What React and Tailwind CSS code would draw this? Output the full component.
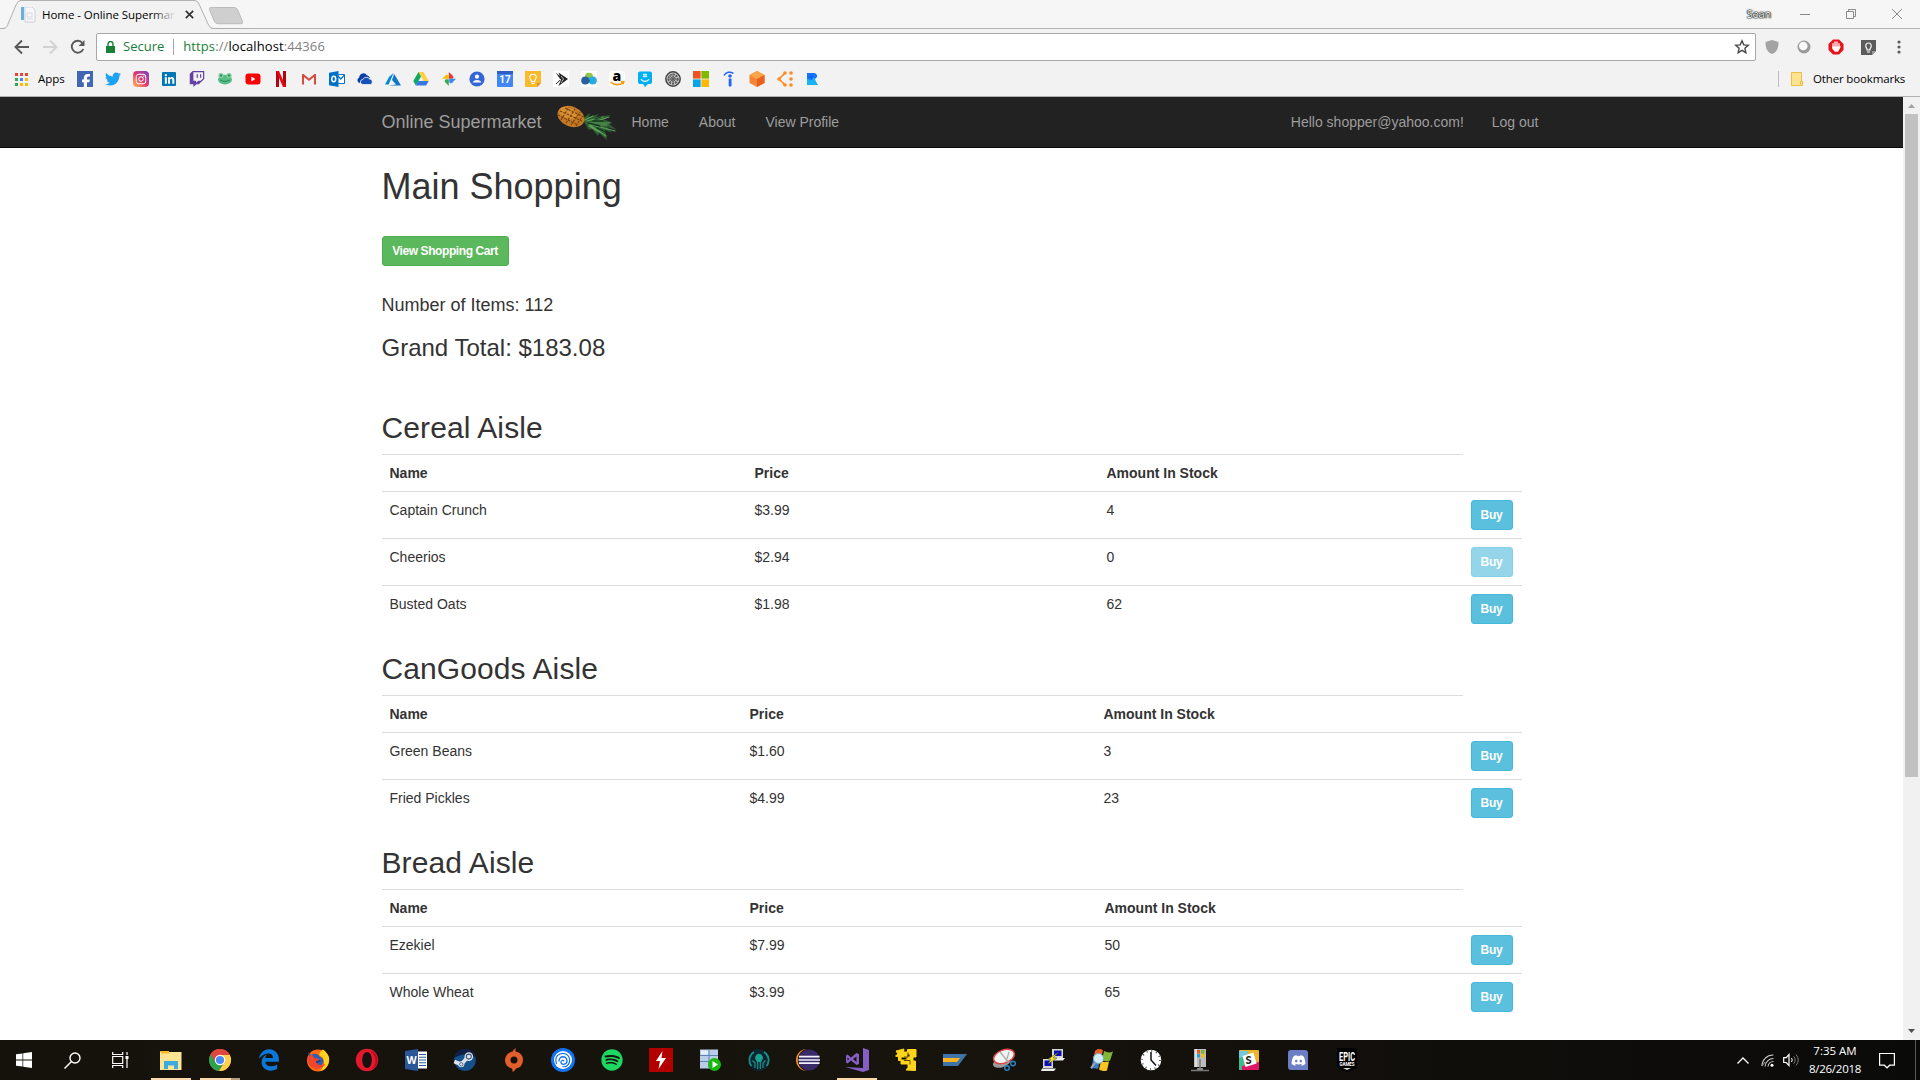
import React from "react";
import {
  FaFacebookF, FaTwitter, FaInstagram, FaLinkedinIn, FaTwitch,
  FaSpotify, FaDiscord, FaEdgeLegacy,
} from "react-icons/fa6";

const S = ({ s = 16, vb = "0 0 16 16", children }) => (
  <svg width={s} height={s} viewBox={vb} fill="none" className="block shrink-0 overflow-visible">{children}</svg>
);

/* ---------- bookmark icons ---------- */
const bookmarks = [
  <div className="flex h-4 w-4 items-end justify-end overflow-hidden bg-[#4267b2] text-white"><FaFacebookF size={14} className="-mb-px" /></div>,
  <FaTwitter size={16} color="#1da1f2" />,
  <div className="flex h-4 w-4 items-center justify-center rounded bg-linear-to-tr from-[#fdb844] via-[#e1306c] to-[#6a35c9] text-white"><FaInstagram size={12} /></div>,
  <div className="flex h-[14px] w-[14px] items-center justify-center rounded-[1px] bg-[#0077b5] text-white"><FaLinkedinIn size={11} /></div>,
  <FaTwitch size={16} color="#6441a5" />,
  <S>
    <ellipse cx="8" cy="8.6" rx="7" ry="4.9" fill="#57bd84" />
    <circle cx="4" cy="4.6" r="2.6" fill="#7ccf9f" /><circle cx="12" cy="4.6" r="2.6" fill="#7ccf9f" />
    <circle cx="4" cy="4.5" r="1.1" fill="#2f7d55" /><circle cx="12" cy="4.5" r="1.1" fill="#2f7d55" />
    <path d="M3 9c3 1.8 7 1.8 10 0" stroke="#2f8a5b" />
  </S>,
  <S><rect x=".5" y="2.5" width="15" height="11" rx="3" fill="#f00" /><path d="M6.4 5.6v4.8L10.4 8z" fill="#fff" /></S>,
  <S><path d="M3 0h3v16H3zM10 0h3v16h-3z" fill="#b1060f" /><path d="M3 0h3l7 16h-3z" fill="#e50914" /></S>,
  <S><path d="M1 3h14v10.500H1z" fill="#f2f2f2" /><path d="M1 3v10.500h2V6l5 4 5-4v7.500h2V3h-1.500L8 7.500 2.500 3z" fill="#d54b3d" /></S>,
  <S>
    <path d="M8 3.500h7.500v9H8z" fill="#fff" stroke="#0072c6" /><path d="M8 4l3.800 4 3.700-4" stroke="#0072c6" strokeWidth="1.200" />
    <path d="M0 1.800L9.500 0v16L0 14.200z" fill="#0072c6" /><ellipse cx="4.700" cy="8" rx="2" ry="2.700" stroke="#fff" strokeWidth="1.500" />
  </S>,
  <S><path d="M2.500 12a3 3 0 01-.3-5.600A4.300 4.300 0 0110 4.200 5 5 0 0113 7L7 9z" fill="#0a3fa8" /><path d="M6 13.500a2.500 2.500 0 01-.2-5A3.800 3.800 0 0112.500 8a2.800 2.800 0 01.8 5.500z" fill="#1450b8" stroke="#f2f2f2" strokeWidth=".8" /></S>,
  <S><path d="M8.600 2L4.200 5.800 0 13.400h3.600z" fill="#0089d6" /><path d="M9.200 3L7 9l4 4.500-7.500 1H16z" fill="#1277c4" /></S>,
  <S><path d="M5.500 1h5l5.200 9h-5z" fill="#ffcf44" /><path d="M5.500 1L.3 10l2.500 4.500L8 5.500z" fill="#11a861" /><path d="M5.200 10h10.500l-2.600 4.500H2.700z" fill="#3777e3" /></S>,
  <S>
    <path d="M7.800 7.800V1l4.200 4c.7 1 .3 2.800-1 2.800z" fill="#e53935" /><path d="M8.200 7.800H15l-4 4.200c-1.200.8-2.800 0-2.800-1.500z" fill="#4285f4" />
    <path d="M7.800 8.200V15L4 11c-.8-1.200 0-2.800 1.500-2.800z" fill="#34a853" /><path d="M7.800 7.800H1l4-3.700c1.300-.8 2.800 0 2.800 1.400z" fill="#fbbc05" />
  </S>,
  <S><circle cx="8" cy="8" r="7.600" fill="#3367d6" /><circle cx="8" cy="5.700" r="2.100" fill="#fff" /><path d="M3.800 11.600c0-3.500 8.400-3.500 8.400 0z" fill="#fff" /></S>,
  <div className="flex h-4 w-4 flex-col items-center rounded-[1px] bg-[#4285f4]"><div className="h-[3px] w-full bg-[#2f5fc4]" /><div className="font-[Roboto] text-[10px] leading-[12px] font-bold text-white">17</div></div>,
  <S><path d="M0 0h16v12l-4 4H0z" fill="#f9bb2d" /><path d="M12 16l4-4h-4z" fill="#d9931c" /><path d="M6.300 10.800V9.500C3.200 6.500 5 3.200 8 3.200s4.800 3.300 1.700 6.300v1.300zM6.500 12.500h3" stroke="#fff" strokeWidth="1.100" /></S>,
  <S><path d="M0 0h16v16H0z" fill="#fff" /><path d="M2.500 1.500L8 6l-.5 2.500zM5.500 1.500L15 8l-9.500 7L8 8.500z" fill="#222" /><path d="M3 13l4-3.800" stroke="#222" /><path d="M8 5l2.500 3-2.500 4" stroke="#fff" strokeWidth=".7" /></S>,
  <S><path d="M0 0h16v16H0z" fill="#fff" /><circle cx="8" cy="5.800" r="4" fill="#8cc63f" /><circle cx="4.300" cy="9.500" r="4.100" fill="#2b5f9e" /><circle cx="11.700" cy="9.500" r="4.100" fill="#29abe2" /><path d="M8 7.500a4 4 0 010 4 4 4 0 010-4z" fill="#145b80" /></S>,
  <div className="flex h-4 w-4 items-center justify-center rounded-sm bg-white"><svg width="16" height="16" viewBox="0 0 16 16" className="overflow-visible"><text x="3.600" y="10" fontFamily="Open Sans" fontWeight="800" fontSize="14" fill="#000">a</text><path d="M1.500 11c3.500 3.400 9 3.500 12.500.6M12 10.800l2.800-.2-.8 2.600" fill="none" stroke="#f90" strokeWidth="1.600" /></svg></div>,
  <S><path d="M3 .5h10q2 0 2 2V11q0 2-2 2h-2l-3 3-2-3H3q-2 0-2-2V2.500q0-2 2-2z" fill="#00aff0" /><path d="M4 8.300c1.500 2.700 6.500 2.700 8 0" stroke="#fff" strokeWidth="1.200" /><path d="M7 2.500v4M9 2.500v4M5.800 3.600h4.400M5.800 5.400h4.400" stroke="#fff" strokeWidth=".8" /></S>,
  <S><circle cx="8" cy="8" r="7.200" stroke="#444" strokeWidth="1.500" fill="#ccc" /><circle cx="8" cy="8" r="4.600" stroke="#555" strokeWidth="1.700" strokeDasharray="2 1" /><circle cx="8" cy="8" r="2.200" stroke="#444" /><path d="M8 2v12M2 8h12M4 4l8 8M12 4l-8 8" stroke="#555" strokeWidth=".7" /></S>,
  <S><path d="M0 0h7.600v7.600H0z" fill="#f25022" /><path d="M8.400 0H16v7.600H8.400z" fill="#7fba00" /><path d="M0 8.400h7.600V16H0z" fill="#00a4ef" /><path d="M8.400 8.400H16V16H8.400z" fill="#ffb900" /></S>,
  <S><path d="M3 4.500C5 .8 9 .3 12.500 2.300" stroke="#2164f3" strokeWidth="1.500" /><circle cx="9" cy="5" r="1.800" fill="#2164f3" /><path d="M7.700 7.500h2.800V15q-1.400 1-2.800 0z" fill="#2164f3" /></S>,
  <S><path d="M8 0l7.500 4v8L8 16 .5 12V4z" fill="#f58536" /><path d="M8 0l7.500 4L8 8 .5 4z" fill="#faa54a" /><path d="M8 8l7.500-4v8L8 16z" fill="#e8601c" /></S>,
  <S><path d="M8 2L2 8l6 6" stroke="#ff8a1f" strokeWidth="1.700" /><g fill="#ff8a1f"><circle cx="8" cy="2" r="1.800" /><circle cx="8" cy="14" r="1.800" /><circle cx="14" cy="2" r="1.800" /><circle cx="14" cy="8" r="1.800" /><circle cx="14" cy="14" r="1.800" /><circle cx="2" cy="8" r="1.800" /></g></S>,
  <S><path d="M2 2h7q3.500.5 3 4l-3 3 4 5H2z" fill="#1473ff" /><path d="M2 8l5 1 2-3 3.500 8H2z" fill="#17b3f5" /><path d="M4.500 6h3" stroke="#0c4fc0" /></S>,
];

/* ---------- taskbar icons ---------- */
const T = ({ children }) => <S s={24} vb="0 0 24 24">{children}</S>;
const apps = [
  [<T><path d="M1 4q0-1 1-1h7l1 1h12.500v18H1z" fill="#ffe493" /><path d="M2 3h8v2.500H2z" fill="#f6b921" /><path d="M5 13h14v8H5z" fill="#3da9dc" /><path d="M9 17.500h6V21H9z" fill="#ffe493" /></T>, "on"],
  [<T>
    <circle cx="12" cy="12" r="11" fill="#e0473c" /><path d="M12 12L2.500 6.500A11 11 0 0011 23l5-9z" fill="#2ba24c" /><path d="M12 6.800h9.700A11 11 0 0111 23l5.500-9z" fill="#fdd14b" />
    <path d="M2.500 6.500A11 11 0 0121.800 7H12l-4.500 7.500z" fill="#e0473c" /><circle cx="12" cy="12" r="5.200" fill="#fff" /><circle cx="12" cy="12" r="4.100" fill="#4a8af4" />
  </T>, "multi"],
  [<FaEdgeLegacy size={22} color="#0b78d7" />],
  [<T>
    <circle cx="12" cy="12.500" r="11" fill="#ff6a13" /><path d="M17 1.500c5.500 4 8 9 5 15a11 11 0 01-8 6.500c7-7 4-14-1-16 1-3 2-4 4-5.500z" fill="#ffd21f" />
    <path d="M2 4l3 3c4-3 8 0 9 2 3 1 4 4 3 6-4 7-12 3-12-2z" fill="#2b5fb8" /><path d="M1.500 10c0 12 13 14 18 6-6 2-8 1-9-2l3-3-5-1-3-4z" fill="#f2452d" /><path d="M10 13l5-1c-1 2-3 3-5 3z" fill="#184487" />
  </T>],
  [<T><ellipse cx="12" cy="12" rx="11.200" ry="11.200" fill="#e3182d" /><ellipse cx="12" cy="12" rx="4.800" ry="8" fill="#15110d" /><path d="M15 3c8 1 11 13 2 18 6-6 4-15-2-18z" fill="#a90e20" /></T>],
  [<T><path d="M13 3.500h10v17H13z" fill="#fff" /><path d="M15 6.500h7M15 9.200h7M15 12h7M15 14.800h7M15 17.500h7" stroke="#2b579a" strokeWidth="1.100" /><path d="M1 3l13-2v22L1 21z" fill="#2b579a" /><text x="2.500" y="16" fontFamily="Open Sans" fontSize="10.500" fontWeight="700" fill="#fff">W</text></T>],
  [<T>
    <circle cx="12" cy="12" r="10.800" fill="#14508c" /><path d="M1.300 10A10.800 10.800 0 0122.700 10C15 5 8 6 1.300 10z" fill="#101d45" />
    <path d="M1.300 13.500l7 3 6-7" stroke="#dde3e8" strokeWidth="3.600" /><circle cx="8.300" cy="16.300" r="3" fill="#dde3e8" /><circle cx="15.800" cy="8.600" r="4.300" fill="#dde3e8" /><circle cx="15.800" cy="8.600" r="2.500" stroke="#39587c" strokeWidth="1.100" /><circle cx="8.300" cy="16.300" r="1.700" stroke="#39587c" strokeWidth=".8" />
  </T>],
  [<T><path d="M14 0c-2 1.500-3 2-3.300 3.500A9 9 0 003 12c0 4 2.500 7.500 7 8.500.5 1.500.7 2.500.5 3.500 2-1 3-2.200 3.500-3.500A9 9 0 0021 12c0-4.500-3-7.800-7.500-8.500-.2-1.500 0-2.500.5-3.500z" fill="#e25f2c" /><circle cx="12" cy="12" r="3.500" fill="#15110d" /></T>],
  [<T><circle cx="12" cy="12" r="12" fill="#1173f0" /><circle cx="12" cy="12" r="9" fill="#fff" /><path d="M5.500 16C3 8.500 8 5 12.500 5.300 17 5.500 19.500 10 18.500 14c-1 3.500-4 5.500-7 4.500" stroke="#1173f0" strokeWidth="1.200" /><path d="M8 13.500c-.3-6.500 8-6 8-.5 0 3.500-5 4.500-6 1.800-.5-2.300 2.300-3.300 3-1.500" stroke="#1173f0" strokeWidth="1.300" /></T>],
  [<FaSpotify size={22} color="#1ed760" />],
  [<T><path d="M0 0h24v24H0z" fill="#b20000" /><path d="M13.500 3L7 13h4l-1.500 8L17 10h-4.500z" fill="#fff" /></T>],
  [<T><path d="M2 1.500h18v19H2z" fill="#b9cce8" /><path d="M2 7.500h18M2 13.500h18M11 1.500v19" stroke="#5f84b8" /><path d="M3 2.500h7v4H3z" fill="#e7effa" /><circle cx="16.500" cy="16.500" r="6.500" fill="#17b90c" /><path d="M14.500 13v7l5.500-3.500z" fill="#fff" /></T>],
  [<T><circle cx="12" cy="12" r="11" fill="#102331" /><path d="M7 4a9.500 9.500 0 00-2.500 14M17 4a9.500 9.500 0 012.500 14" stroke="#168f85" strokeWidth="1.700" /><path d="M8 20v-5l-2.500-2.500M16 20v-5l2.500-2.500M10.700 21v-8M13.300 21v-8" stroke="#168f85" strokeWidth="1.300" /><path d="M8 10.500c0-6.500 8-6.500 8 0l-2 3.500h-4z" fill="#1aa091" /></T>],
  [<T><circle cx="11" cy="12" r="11" fill="#f29022" /><circle cx="13" cy="12" r="11.200" fill="#15110d" /><circle cx="13.200" cy="12" r="10.600" fill="#382b6c" /><path d="M3 8.700h20.500M2.500 12h21.500M3 15.200h20.500" stroke="#f1f1fa" strokeWidth="1.700" /></T>],
  [<T><path d="M18 0l6 2v20l-6 2-18-5 18 1z" fill="#865fc5" /><path d="M1 7.500l1.500-1L6 9.500 11.500 5 14 6v10l-2.500 1L6 12.500 2.500 15.500 1 14.500zm1.500 2v3l1.700-1.500zm5.500 1.500l3.500 3V8.500z" fill="#865fc5" fillRule="evenodd" /></T>, "on"],
  [<T>
    <path d="M2 3l8-2-.5 3H13v5H7v3h6V9h3V6h-2.500V1.500H22V9h-3v4h2.500v9.500L12 22l2-2.500V16H7v-3.500H4.500V9L1.500 8 4 6z" fill="#ffd51b" stroke="#ffd51b" />
    <path d="M14 4.500V9h-4M10 12.500h6v4" stroke="#5d4c04" />
  </T>],
  [<T><path d="M0 6h24L15 18H0z" fill="#3e74a8" /><path d="M0 10h17l-3 4H0z" fill="#ffb31c" /></T>],
  [<T>
    <ellipse cx="10" cy="14" rx="9.500" ry="5" transform="rotate(-22 10 14)" fill="#9c9c9c" /><ellipse cx="12" cy="8.500" rx="10.800" ry="6.500" transform="rotate(-20 12 8.500)" fill="#f4f4f4" stroke="#d44" strokeWidth="1.500" />
    <path d="M8 4l9 11M17 4l-3 10" stroke="#aaa" strokeWidth="1.200" /><circle cx="15" cy="20" r="2.300" stroke="#2a80c4" strokeWidth="1.500" /><circle cx="21" cy="15.500" r="2.300" stroke="#2a80c4" strokeWidth="1.500" />
  </T>],
  [<T>
    <path d="M11 1h11v9H11z" fill="#d8d8d8" /><path d="M13 2.500h7.500v5.500H13z" fill="#0a10b4" /><path d="M9 10h15l-2 2.500H10z" fill="#eee" />
    <path d="M2 11h10v9H2z" fill="#d8d8d8" /><path d="M3.500 12.500h7V18h-7z" fill="#0a10b4" /><path d="M1 20.500h14L13 23H0z" fill="#eee" /><path d="M18 4l-6 6h4l-9 6 3-5H7z" fill="#fff21a" stroke="#333" strokeWidth=".5" />
  </T>],
  [<T>
    <path d="M5 3c3-3 5-2 8-1l-2 9c-3-1.500-5-1.500-8 0z" fill="#e8622a" /><path d="M14 3c3 1.500 6 2 9 .5l-3 9c-3 1.500-5 1-8-.5z" fill="#83b737" />
    <path d="M3 12c3-1.500 5-1 7 0l-2 9c-3-1-5-1-7 0z" fill="#3c7dc8" /><path d="M11 13c3 1 5 1.500 8 .5l-2 9c-3 1-5 .5-8-1z" fill="#f9c41f" /><circle cx="8.500" cy="10.500" r="5" fill="#d3edfc" stroke="#7aa8cc" /><path d="M5 15l-4 5" stroke="#aaa" strokeWidth="2" />
  </T>],
  [<T><circle cx="12" cy="12" r="10.300" fill="#fff" /><circle cx="12" cy="12" r="9" stroke="#333" strokeWidth="1.500" strokeDasharray="1 3.710" /><path d="M12 4v8l5 5.500" stroke="#111" strokeWidth="1.500" /></T>],
  [<T><path d="M6 1h12v18H6z" fill="#bcbcbc" /><path d="M7 1h2v18H7z" fill="#dedede" /><path d="M9 2h3v3.500H9z" fill="#f05423" /><path d="M13 2h3.500v3.500H13z" fill="#79b929" /><path d="M9 6h3v3.500H9z" fill="#18a3e6" /><path d="M13 6h3.500v3.500H13z" fill="#fdbb12" /><path d="M12 11v11M3 22.500h18" stroke="#777" strokeWidth="1.500" /><path d="M9 20h6v2H9z" fill="#888" /></T>],
  [<T><path d="M3 2h18q1 0 1 1v18q0 1-1 1H3q-1 0-1-1V3q0-1 1-1z" fill="#ecb32d" /><path d="M2 3h9L6 22H3l-1-1z" fill="#3eb890" /><path d="M2 3h9l-1 5-8 2z" fill="#70cadb" /><path d="M5 18l17-4v8H5z" fill="#e01765" /><path d="M5.500 8l11-3.500 3 11-11 3.500z" fill="#fff" /><text x="8.500" y="16" fontFamily="Lato" fontWeight="900" fontSize="11" fill="#222">S</text></T>],
  [<div className="flex h-[20px] w-[20px] items-center justify-center rounded-[3px] rounded-br-none bg-[#6b7fc4] text-white"><FaDiscord size={15} /></div>],
  [<T><path d="M2 0h20v20l-10 4-10-4z" fill="#000" /><text x="4" y="12.500" textLength="16" lengthAdjust="spacingAndGlyphs" fontFamily="Roboto" fontWeight="700" fontSize="13" fill="#fff">EPIC</text><text x="4.500" y="17.500" textLength="15" fontFamily="Roboto" fontWeight="700" fontSize="4.500" fill="#fff">GAMES</text><path d="M8 20h8l-4 2z" fill="#ddd" /></T>],
];

function TabStrip() {
  return (
    <div className="relative flex h-[29px] items-start border-b border-[#b3b3b3] bg-[#f6f6f6]">
      <svg width="250" height="29" className="absolute top-0 left-0" fill="none">
        <path d="M4 29C7 28 7 26 8 24L16 5q2-4 4-4.500H195q3 .5 4 3.500l9 20q2 5 5 5z" fill="#f2f2f2" />
        <path d="M0 28.500H3C7 28 7 26 8 24L16 5q2-4 4-4.500H195q3 .5 4 3.500l9 20q2 4.500 5 4.500H250" stroke="#b0b0b0" />
        <path d="M210.500 7.500H234q2.500 0 3.500 2l5 12q.8 2.200-1.500 2.200H218q-2.500 0-3.500-2l-5-12q-.8-2 1-2.200z" fill="#cfcfcf" stroke="#bcbcbc" />
      </svg>
      <div className="relative flex h-[29px] w-[210px] items-center pl-5">
        <svg width="16" height="16" viewBox="0 0 16 16" fill="none">
          <path d="M1 0h3v13H1z" fill="#6bb0dd" /><path d="M5 0h7l3 3v12H5z" fill="#f8f8f8" stroke="#ccd0d8" /><path d="M7 6h5v4H7zM7 12h6" stroke="#d5d9e0" />
        </svg>
        <div className="relative ml-1.5 w-[134px] text-[11.500px] leading-4 tracking-[-0.05px] whitespace-nowrap text-black">
          Home - Online Supermar
          <div className="absolute top-0 right-0 h-4 w-6 bg-linear-to-r from-transparent to-[#f2f2f2]" />
        </div>
        <svg width="9" height="9" viewBox="0 0 9 9" className="ml-[9px]"><path d="M.8.8l7.400 7.400M8.200.8L.8 8.200" stroke="#333" strokeWidth="1.700" /></svg>
      </div>
      <div className="ml-auto flex h-[27px] items-center">
        <span className="mr-[29px] text-[11px] leading-4 tracking-[-0.2px] text-white [text-shadow:0_0_1px_#000,0_0_1px_#000,0_0_1px_#000,0_0_2px_#333]">Sean</span>
        <svg width="103" height="12" viewBox="0 0 103 12" fill="none" stroke="#8a8a8a" className="mr-[17px]">
          <path d="M0 6.500h10M46.500 3.500h7v7h-7zM48.500 3V1.500h7v7H54M92 1l10 10M102 1L92 11" />
        </svg>
      </div>
    </div>
  );
}

function Toolbar() {
  return (
    <div className="flex h-[36px] items-center">
      <svg width="96" height="28" viewBox="0 0 96 28" fill="none" className="shrink-0">
        <path d="M29 14H16M22 7.500L15.500 14l6.500 6.500" stroke="#5a5a5a" strokeWidth="1.900" />
        <path d="M43 14h13M50 7.500l6.500 6.500-6.500 6.500" stroke="#d2d2d2" strokeWidth="1.900" />
        <path d="M82.500 10a6 6 0 10.800 6" stroke="#5a5a5a" strokeWidth="1.900" /><path d="M84.500 7v6h-6z" fill="#5a5a5a" />
      </svg>
      <div className="flex h-7 w-[1660px] items-center rounded-[2px] border border-[#a8a8a8] bg-white text-[13px]">
        <svg width="9" height="12" viewBox="0 0 9 12" className="ml-[9px]"><path d="M0 5h9v7H0z" fill="#188038" /><path d="M2 5.500V3a2.500 2.500 0 015 0v2.500" fill="none" stroke="#188038" strokeWidth="1.400" /></svg>
        <span className="ml-2 text-[#188038]">Secure</span>
        <span className="mr-[9px] ml-[9px] h-4 w-px bg-[#a9a9a9]" />
        <span className="tracking-[0.1px] text-[#808080]"><span className="text-[#188038]">https</span>://<span className="text-black">localhost</span>:44366</span>
        <svg width="16" height="16" viewBox="0 0 16 16" fill="none" className="mr-[5px] ml-auto"><path d="M8 1.800l1.800 4.100 4.500.4-3.400 3 1 4.400L8 11.400l-3.900 2.300 1-4.400-3.400-3 4.500-.4z" stroke="#4a4a4a" strokeWidth="1.400" /></svg>
      </div>
      <div className="flex flex-1 items-center">
        <svg width="14" height="14" viewBox="0 0 14 14" className="ml-[9px]"><path d="M7 0l6.500 2c0 6-1.500 10-6.500 12C2 12 .5 8 .5 2z" fill="#a3a3a3" /></svg>
        <svg width="14" height="14" viewBox="0 0 14 14" className="ml-[18px]"><circle cx="7" cy="7" r="6.500" fill="#9b9b9b" /><circle cx="6.300" cy="6" r="4.300" fill="#fafafa" /></svg>
        <svg width="16" height="16" viewBox="0 0 16 16" className="ml-[17px]"><path d="M5 .5h6L15.500 5v6L11 15.500H5L.5 11V5z" fill="#e8141c" /><path d="M5 9V4.700M7 8V3M9 8V3M11 9V4.700" stroke="#fff" strokeWidth="1.300" strokeLinecap="round" /><path d="M4.400 7.500H11l1.400-.8v1.800L10 12.800H7L4.400 10z" fill="#fff" /></svg>
        <svg width="15" height="15" viewBox="0 0 15 15" fill="none" className="ml-[17px]"><path d="M0 0h15v11l-4 4H0z" fill="#5c5c5c" /><path d="M11 15l4-4h-4z" fill="#999" /><path d="M6 10V8.800C3.500 6 5 3 7.500 3S11.500 6 9 8.800V10zM6 12h3" stroke="#fff" strokeWidth="1.200" /></svg>
        <svg width="4" height="14" viewBox="0 0 4 14" className="ml-[21px]" fill="#5a5a5a"><circle cx="2" cy="2" r="1.600" /><circle cx="2" cy="7" r="1.600" /><circle cx="2" cy="12" r="1.600" /></svg>
      </div>
    </div>
  );
}

const dots = ["#ea4335", "#ea4335", "#ea4335", "#34a853", "#4285f4", "#fbbc05", "#34a853", "#fbbc05", "#fbbc05"];

function Bookmarks() {
  return (
    <div className="flex h-[32px] items-center border-b border-[#b0b0b0] pb-[3px] text-[11.500px] text-black">
      <div className="ml-[15px] grid grid-cols-3 gap-[2px]">
        {dots.map((c, i) => <div key={i} className="h-[3px] w-[3px]" style={{ background: c }} />)}
      </div>
      <span className="ml-[10px] w-[33px]">Apps</span>
      <div className="flex">
        {bookmarks.map((b, i) => <div key={i} className="flex h-4 w-7 items-center justify-center">{b}</div>)}
      </div>
      <span className="ml-auto h-4 w-px bg-[#bdbdbd]" />
      <svg width="13" height="14" viewBox="0 0 13 14" className="ml-3"><path d="M.5.5h10v9h1v4H.5z" fill="#ffe391" stroke="#e9bf45" /><path d="M9.500 9.500h2v4h-2z" fill="#ffe391" stroke="#e9bf45" /></svg>
      <span className="ml-[9px] w-[107px] tracking-[-0.15px]">Other bookmarks</span>
    </div>
  );
}

function Pineapple() {
  return (
    <svg width="60" height="35" viewBox="0 0 60 35" fill="none">
      <g strokeLinecap="round" strokeLinejoin="round">
        <path d="M25 14l8-6-1 4 10-3-3 3 15-2-8 4 10 4-5 0 9 7-10-3 5 6-7-3 2 10-8-7-1 3-6-7-3 1-5-8z" fill="#2d5f33" />
        <path d="M28 15l8-4M30 16l16-4M31 18l22 0M32 19l26 7M33 20l16 11M32 21l10 6M40 16l12-4M42 20l8 0" stroke="#63a05b" strokeWidth="1.200" />
        <path d="M31 18l12 3M36 16l10 0M40 23l9 4M38 14l6-2" stroke="#143a1e" strokeWidth="1.300" />
      </g>
      <ellipse cx="14" cy="11.500" rx="14" ry="10" transform="rotate(22 14 11.500)" fill="#c47a24" />
      <ellipse cx="11" cy="8" rx="9" ry="5.500" transform="rotate(22 11 8)" fill="#d98f33" />
      <path d="M3 6l22 10M1 10l20 10M8 3l19 9M4 15l8-13M9 18l9-14M14 20l9-13M19 21l6-9" stroke="#75400f" strokeWidth="1.100" strokeDasharray="2.500 1.200" />
    </svg>
  );
}

const aisles = [
  { title: "Cereal Aisle", cols: "grid-cols-[365px_352px_364px_1fr]", rows: [["Captain Crunch", "$3.99", "4"], ["Cheerios", "$2.94", "0"], ["Busted Oats", "$1.98", "62"]] },
  { title: "CanGoods Aisle", cols: "grid-cols-[360px_354px_367px_1fr]", rows: [["Green Beans", "$1.60", "3"], ["Fried Pickles", "$4.99", "23"]] },
  { title: "Bread Aisle", cols: "grid-cols-[360px_355px_366px_1fr]", rows: [["Ezekiel", "$7.99", "50"], ["Whole Wheat", "$3.99", "65"]] },
];

function Aisle({ title, cols, rows }) {
  return (
    <section className="mb-5">
      <h2 className="mb-[10px] h-[33px] text-[30px] leading-[33px] tracking-[0.1px]">{title}</h2>
      <div className="text-[14px] leading-5">
        <div className={"grid font-bold " + cols}>
          {["Name", "Price", "Amount In Stock"].map((h) => <div key={h} className="h-[37px] border-t border-[#ddd] p-2">{h}</div>)}
        </div>
        {rows.map(([n, p, a]) => (
          <div key={n} className={"grid h-[47px] border-t border-[#ddd] " + cols}>
            <div className="p-2">{n}</div>
            <div className="p-2">{p}</div>
            <div className="p-2">{a}</div>
            <div className="p-2">
              <button className={"block h-[30px] w-[42px] rounded-[3px] border border-[#46b8da] bg-[#5bc0de] text-[12px] leading-[18px] font-bold tracking-[-0.3px] text-white " + (a === "0" ? "opacity-65" : "")}>Buy</button>
            </div>
          </div>
        ))}
      </div>
    </section>
  );
}

function Page() {
  return (
    <div className="flex h-[943px] font-['Liberation_Sans',Arial,sans-serif]">
      <main className="w-[1903px] overflow-hidden bg-white text-[#333]">
        <nav className="flex h-[51px] items-center border-b border-[#080808] bg-[#222] pl-[381.500px] text-[14px] text-[#9d9d9d]">
          <span className="w-[175.500px] text-[18px] leading-5">Online Supermarket</span>
          <Pineapple />
          <div className="ml-[14.500px] flex gap-[30px]"><span>Home</span><span>About</span><span>View Profile</span></div>
          <div className="mr-[364.500px] ml-auto flex gap-[28px]"><span>Hello shopper@yahoo.com!</span><span>Log out</span></div>
        </nav>
        <div className="ml-[381.500px] w-[1140px] pt-[19px]">
          <h1 className="h-[39px] text-[36px] leading-[39px]">Main Shopping</h1>
          <button className="mt-[30px] block h-[30px] w-[127px] rounded-[3px] border border-[#4cae4c] bg-[#5cb85c] text-[12px] leading-[18px] font-bold tracking-[-0.42px] whitespace-nowrap text-white">View Shopping Cart</button>
          <h4 className="mt-[29px] text-[18px] leading-5">Number of Items: 112</h4>
          <h3 className="mt-5 mb-[50px] text-[24px] leading-[26px]">Grand Total: $183.08</h3>
          {aisles.map((a) => <Aisle key={a.title} {...a} />)}
        </div>
      </main>
      <div className="flex w-[17px] flex-col items-center bg-[#f1f1f1]">
        <svg width="17" height="17" viewBox="0 0 17 17"><path d="M5 11h7L8.500 7z" fill="#a3a3a3" /></svg>
        <div className="h-[663px] w-[13px] bg-[#c1c1c1]" />
        <svg width="17" height="17" viewBox="0 0 17 17" className="mt-auto"><path d="M5 6h7l-3.500 4z" fill="#505050" /></svg>
      </div>
    </div>
  );
}

function Taskbar() {
  return (
    <div className="flex h-10 items-center bg-linear-to-r from-[#15120c] via-[#17130d] to-[#0a0a09] text-white">
      <div className="flex w-12 justify-center"><svg width="16" height="16" viewBox="0 0 16 16"><path d="M0 2.300l6.500-.9v6.200H0zM7.200 1.300L16 0v7.600H7.200zM0 8.400h6.500v6.200L0 13.700zM7.200 8.400H16V16l-8.800-1.300z" fill="#fff" /></svg></div>
      <div className="flex w-12 justify-center"><svg width="17" height="17" viewBox="0 0 17 17" fill="none" stroke="#fff" strokeWidth="1.400"><circle cx="11" cy="6" r="5" /><path d="M7.500 9.500L.5 16.500" /></svg></div>
      <div className="flex w-12 justify-center"><svg width="17" height="16" viewBox="0 0 17 16" fill="none" stroke="#fff" strokeWidth="1.200"><path d="M.7 0v2.500h10V0M.7 16v-2.500h10V16M.7 4.500h10v7H.7zM15 0v3M15 7v9" /><path d="M13.500 4h3v3h-3z" fill="#fff" stroke="none" /></svg></div>
      <div className="ml-[2.500px] flex">
        {apps.map(([icon, state], i) => (
          <div key={i} className="flex h-10 w-[49px] flex-col items-center">
            <div className="flex h-[38px] items-center pt-[2px]">{icon}</div>
            {state && (
              <div className="flex h-[2px] w-10 bg-[#fbd9a8]">
                {state === "multi" && <div className="ml-auto w-[9px] bg-[#b59f80]" />}
              </div>
            )}
          </div>
        ))}
      </div>
      <svg width="12" height="7" viewBox="0 0 12 7" fill="none" className="ml-auto"><path d="M.5 6.500L6 1l5.500 5.500" stroke="#fff" strokeWidth="1.300" /></svg>
      <svg width="13" height="13" viewBox="0 0 13 13" fill="none" className="ml-[12px]"><g stroke="#ccc" strokeWidth="1.100"><path d="M1 12A11 11 0 0112.500 1M4 12.500a8.500 8.500 0 018.500-8M7 12.500a5.500 5.500 0 015.500-5" /><path d="M1 12l3-4" stroke="#888" /></g><circle cx="11" cy="11.200" r="1.500" fill="#fff" /></svg>
      <svg width="17" height="14" viewBox="0 0 17 14" fill="none" className="ml-[9px]"><path d="M.7 4.700h2.500L6 1.500v11L3.200 9.500H.7z" stroke="#fff" strokeWidth="1.200" /><path d="M8.500 5q1.500 2 0 4" stroke="#fff" /><path d="M10.700 3.300q3 3.700 0 7.400M13 1.500q4.500 5.500 0 11" stroke="#777" /></svg>
      <div className="ml-[7px] w-[56px] pb-px text-center text-[11.500px] leading-[18px] whitespace-nowrap"><div>7:35 AM</div><div className="tracking-[-0.25px]">8/26/2018</div></div>
      <svg width="16" height="17" viewBox="0 0 16 17" fill="none" className="ml-[16px]"><path d="M.6 1.500h14.800v11.700h-4.700L8 15.800l-2.700-2.600H.6z" stroke="#fff" strokeWidth="1.200" /></svg>
      <div className="mr-1 ml-[20px] h-10 w-px bg-[#5a5a5a]" />
    </div>
  );
}

export default function App() {
  return (
    <div className="flex h-[1080px] w-[1920px] flex-col overflow-hidden bg-[#f2f2f2] font-['Open_Sans','Noto_Sans',sans-serif]">
      <TabStrip />
      <Toolbar />
      <Bookmarks />
      <Page />
      <Taskbar />
    </div>
  );
}
